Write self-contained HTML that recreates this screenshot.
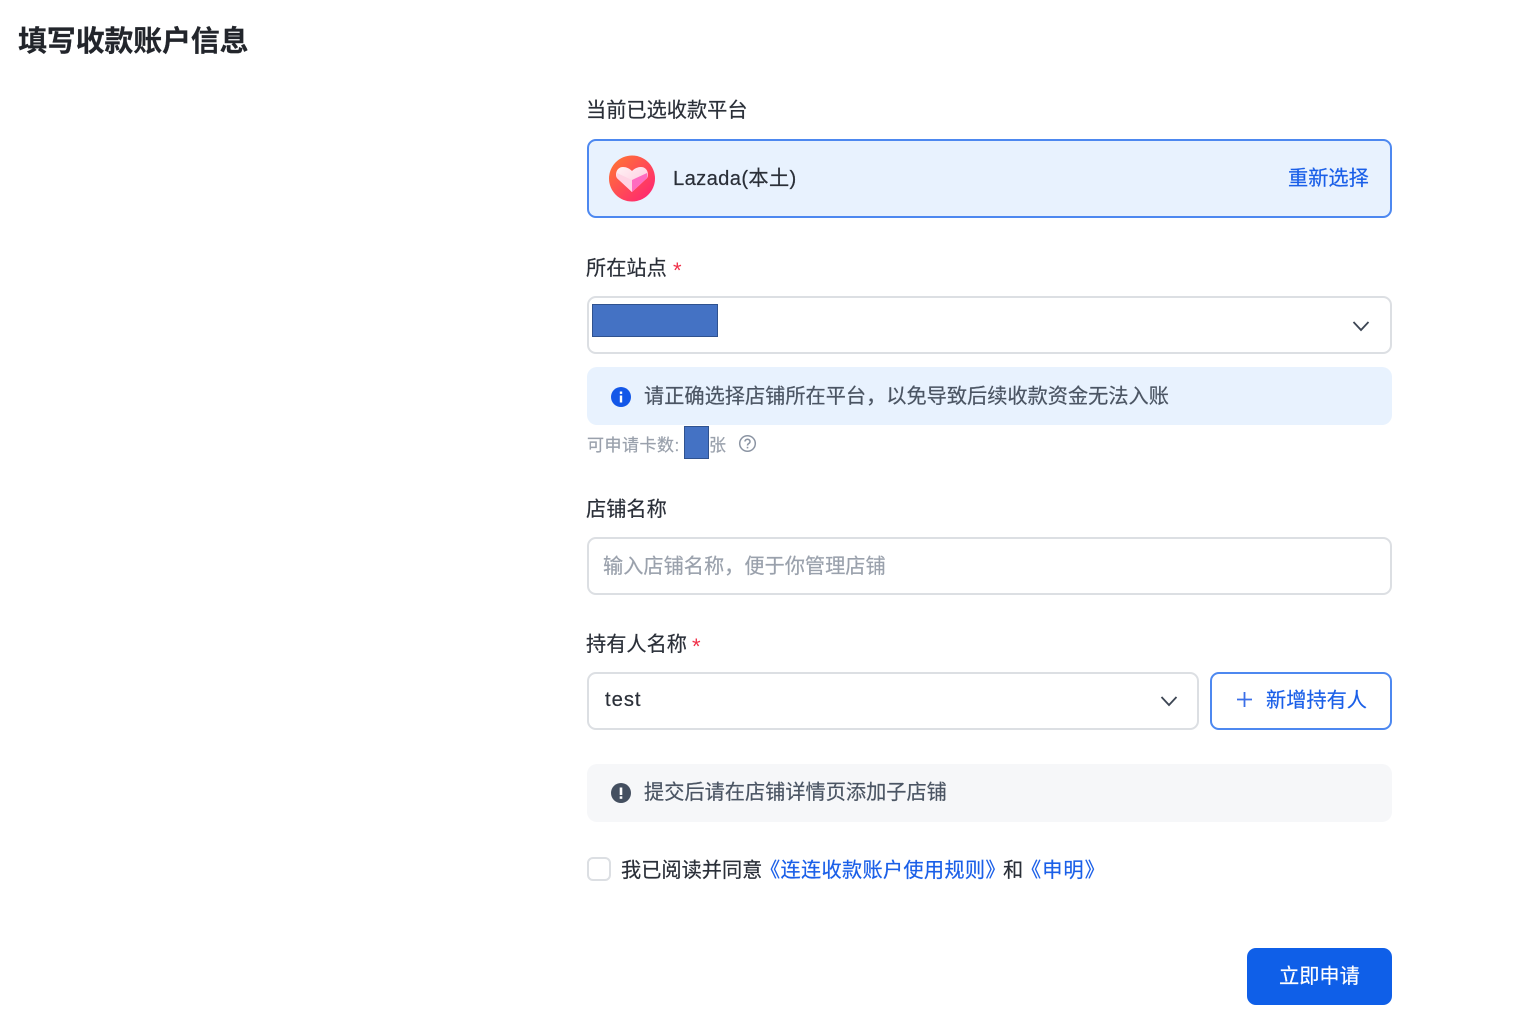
<!DOCTYPE html>
<html lang="zh"><head><meta charset="utf-8"><style>
html,body{margin:0;padding:0;background:#fff}
body{width:1537px;height:1013px;position:relative;overflow:hidden;font-family:"Liberation Sans","Noto Sans CJK SC",sans-serif;color:#2a2f38}
#w{position:absolute;left:0;top:0;width:1537px;height:1013px;filter:blur(.35px)}
.t{position:absolute;white-space:nowrap;line-height:28px;font-size:20.2px;-webkit-text-stroke:.2px currentColor}
.b{position:absolute;box-sizing:border-box;border-radius:9px}
.bl{color:#1a5fe8}
.r{position:absolute;color:#f03048;font-size:22px;line-height:22px}
.red{position:absolute;box-sizing:border-box;background:#4472c4;border:1.500px solid #2f528f}
svg{position:absolute}
</style></head><body><div id="w">
<div class="t" style="left:18px;top:25px;font-size:29px;line-height:34px;font-weight:700;color:#22252b;letter-spacing:-.2px">填写收款账户信息</div>
<div class="t" style="left:586px;top:97px">当前已选收款平台</div>
<div class="b" style="left:587px;top:139px;width:804.500px;height:79px;background:#e8f2fe;border:2px solid #4d88f0"></div>
<svg style="left:609px;top:155px" width="46" height="47" viewBox="0 0 46 47"><defs><linearGradient id="g" x1="0" y1="0" x2="1" y2="1"><stop offset="0" stop-color="#ff7a30"/><stop offset="1" stop-color="#ff1f78"/></linearGradient><linearGradient id="h" x1="0" y1="0" x2="1" y2="1"><stop offset="0" stop-color="#fff2f4"/><stop offset="1" stop-color="#ffc4dc"/></linearGradient></defs><circle cx="23" cy="23.500" r="23" fill="url(#g)"/><path d="M7 20c0-5 3-8 7-8 3.500 0 6.500 1.500 9 4 2.500-2.500 5.500-4 9-4 4 0 7 3 7 8 0 2-1 3.500-2.500 4.500L23 37 9.500 24.500C8 23.500 7 22 7 20z" fill="url(#h)"/><path d="M23 25l15-7c1 3 0 5.500-1.500 6.500L23 37z" fill="#ff6cc0"/><path d="M23 25L8 18c-1 3 0 5.500 1.500 6.500L23 37z" fill="#ffd4e4"/></svg>
<div class="t" style="left:673px;top:165px;letter-spacing:.35px">Lazada(本土)</div>
<div class="t bl" style="left:1288px;top:165px">重新选择</div>
<div class="t" style="left:586px;top:255px">所在站点</div>
<div class="r" style="left:673px;top:260px">*</div>
<div class="b" style="left:587px;top:296px;width:804.500px;height:58px;border:2px solid #dcdfe3"></div>
<div class="red" style="left:592px;top:304px;width:126px;height:33px"></div>
<svg style="left:1352px;top:320px" width="18" height="12" viewBox="0 0 18 12"><path d="M1.500 2l7.500 8 7.500-8" fill="none" stroke="#3d4654" stroke-width="1.800"/></svg>
<div class="b" style="left:587px;top:367px;width:804.500px;height:58px;background:#e8f2fe;border-radius:10px"></div>
<svg style="left:611px;top:387px" width="20" height="20" viewBox="0 0 20 20"><circle cx="10" cy="10" r="10" fill="#1357e8"/><rect x="8.800" y="8.500" width="2.400" height="7" fill="#fff"/><rect x="8.800" y="4.500" width="2.400" height="2.400" fill="#fff"/></svg>
<div class="t" style="left:644px;top:383px;color:#4b5563">请正确选择店铺所在平台，以免导致后续收款资金无法入账</div>
<div class="t" style="left:587px;top:432px;font-size:17px;color:#9aa1ac;letter-spacing:.5px">可申请卡数:</div>
<div class="t" style="left:709px;top:432px;font-size:17px;color:#9aa1ac">张</div>
<div class="red" style="left:684px;top:426px;width:25px;height:33px"></div>
<svg style="left:738px;top:434px" width="19" height="19" viewBox="0 0 19 19"><circle cx="9.500" cy="9.500" r="7.800" fill="none" stroke="#8b94a3" stroke-width="1.500"/><path d="M7 7.500a2.500 2.300 0 1 1 3.800 2c-.9.500-1.300 1-1.300 2" fill="none" stroke="#8b94a3" stroke-width="1.500"/><rect x="8.700" y="12.800" width="1.600" height="1.600" fill="#8b94a3"/></svg>
<div class="t" style="left:586px;top:496px">店铺名称</div>
<div class="b" style="left:587px;top:537px;width:804.500px;height:58px;border:2px solid #dcdfe3"></div>
<div class="t" style="left:603px;top:553px;color:#9aa1ac">输入店铺名称，便于你管理店铺</div>
<div class="t" style="left:586px;top:631px">持有人名称</div>
<div class="r" style="left:692px;top:636px">*</div>
<div class="b" style="left:587px;top:672px;width:611.500px;height:58px;border:2px solid #dcdfe3"></div>
<div class="t" style="left:605px;top:686px;letter-spacing:1px">test</div>
<svg style="left:1160px;top:695px" width="18" height="12" viewBox="0 0 18 12"><path d="M1.500 2l7.500 8 7.500-8" fill="none" stroke="#3d4654" stroke-width="1.800"/></svg>
<div class="b" style="left:1210px;top:672px;width:181.500px;height:58px;border:2px solid #4d88f0"></div>
<svg style="left:1236px;top:691px" width="17" height="17" viewBox="0 0 17 17"><path d="M8.500 1v15M1 8.500h15" stroke="#3b6fe8" stroke-width="1.800" fill="none"/></svg>
<div class="t bl" style="left:1266px;top:687px">新增持有人</div>
<div class="b" style="left:587px;top:764px;width:804.500px;height:58px;background:#f6f7f9;border-radius:10px"></div>
<svg style="left:611px;top:783px" width="20" height="20" viewBox="0 0 20 20"><circle cx="10" cy="10" r="10" fill="#444f60"/><rect x="8.700" y="4.500" width="2.600" height="7.500" fill="#fff"/><rect x="8.700" y="13.300" width="2.600" height="2.500" fill="#fff"/></svg>
<div class="t" style="left:644px;top:779px;color:#4b5563">提交后请在店铺详情页添加子店铺</div>
<div class="b" style="left:587px;top:857px;width:23.500px;height:24px;border:2px solid #dcdfe3;border-radius:6px"></div>
<div class="t" style="left:621px;top:857px">我已阅读并同意</div>
<div class="t bl" style="left:760px;top:857px;letter-spacing:.3px">《连连收款账户使用规则》</div>
<div class="t" style="left:1003px;top:857px">和</div>
<div class="t bl" style="left:1021px;top:857px;letter-spacing:1px">《申明》</div>
<div class="b" style="left:1247px;top:948px;width:144.500px;height:57px;background:#0f5fe8"></div>
<div class="t" style="left:1279px;top:963px;color:#fff">立即申请</div>
</div></body></html>
